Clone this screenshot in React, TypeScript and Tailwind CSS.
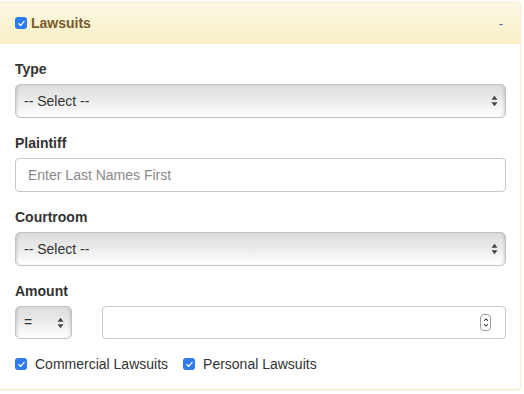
import React from 'react';

const font = { fontFamily: '"Liberation Sans", Arial, sans-serif' };

const Check = ({ size = 'w-3 h-3' }: { size?: string }) => (
  <span className={`${size} shrink-0 rounded-[3px] bg-[#2e7bf0] flex items-center justify-center`}>
    <svg viewBox="0 0 12 12" className="w-[9px] h-[9px]">
      <path d="M2.5 6.3 L5 8.6 L9.5 3.2" fill="none" stroke="white" strokeWidth="1.7" strokeLinecap="round" strokeLinejoin="round" />
    </svg>
  </span>
);

const Arrows = () => (
  <svg viewBox="0 0 8 14" className="w-[7px] h-[12px]">
    <path d="M4 1 L7.5 5.5 L0.5 5.5 Z" fill="#444" />
    <path d="M4 13 L7.5 8.5 L0.5 8.5 Z" fill="#444" />
  </svg>
);

const SelectBox = ({ label, className = '' }: { label: string; className?: string }) => (
  <div
    className={`h-[34px] rounded-[5px] border border-[#c3c3c3] bg-gradient-to-b from-[#dcdcdc] via-[#ececec] to-white shadow-[inset_3px_0_3px_-2px_rgba(0,0,0,0.15),inset_-3px_0_3px_-2px_rgba(0,0,0,0.15)] flex items-center justify-between pl-[8px] pr-[7px] text-[14px] text-[#333] ${className}`}
  >
    <span>{label}</span>
    <Arrows />
  </div>
);

const FieldLabel = ({ children }: { children: React.ReactNode }) => (
  <div className="text-[14px] leading-[20px] font-bold text-[#333] mb-[5px]">{children}</div>
);

export default function App() {
  return (
    <div className="pt-[2px] bg-white w-[524px] h-[394px]" style={font}>
      <div className="w-[521px] border-y border-r border-[#faebcc] rounded-r-[4px] bg-white shadow-[0_1px_1px_rgba(0,0,0,0.04)]">
        <div className="h-[41px] border-b border-[#faebcc] rounded-tr-[4px] bg-gradient-to-b from-[#fcf8e3] to-[#f8efc4] flex items-center pl-[15px] pr-[17px]">
          <Check />
          <span className="ml-[4px] text-[14px] font-bold text-[#7a5a2b]">Lawsuits</span>
          <span className="ml-auto text-[13px] text-[#4a6f93] leading-none">-</span>
        </div>
        <div className="pl-[15px] pr-[14px] pt-[15px] pb-[15px]">
          <div className="mb-[15px]">
            <FieldLabel>Type</FieldLabel>
            <SelectBox label="-- Select --" />
          </div>
          <div className="mb-[15px]">
            <FieldLabel>Plaintiff</FieldLabel>
            <div className="h-[34px] rounded-[4px] border border-[#c8c8c8] flex items-center px-[12px] text-[14px] text-[#8a8a8a]">
              Enter Last Names First
            </div>
          </div>
          <div className="mb-[15px]">
            <FieldLabel>Courtroom</FieldLabel>
            <SelectBox label="-- Select --" />
          </div>
          <div className="mb-[15px]">
            <FieldLabel>Amount</FieldLabel>
            <div className="flex gap-[30px]">
              <SelectBox label="=" className="w-[57px] !h-[33px]" />
              <div className="flex-1 h-[33px] rounded-[4px] border border-[#c8c8c8] flex items-center justify-end pr-[14px]">
                <span className="w-[11px] h-[17px] rounded-[4px] border border-[#999] flex flex-col items-center justify-center">
                  <svg viewBox="0 0 10 16" className="w-[8px] h-[13px]">
                    <path d="M2.5 6 L5 3.5 L7.5 6" fill="none" stroke="#444" strokeWidth="1.3" />
                    <path d="M2.5 10 L5 12.5 L7.5 10" fill="none" stroke="#444" strokeWidth="1.3" />
                  </svg>
                </span>
              </div>
            </div>
          </div>
          <div className="h-[20px] flex items-center text-[14px] text-[#333]">
            <Check />
            <span className="ml-[8px]">Commercial Lawsuits</span>
            <span className="ml-[15px]"><Check /></span>
            <span className="ml-[8px]">Personal Lawsuits</span>
          </div>
        </div>
      </div>
    </div>
  );
}
